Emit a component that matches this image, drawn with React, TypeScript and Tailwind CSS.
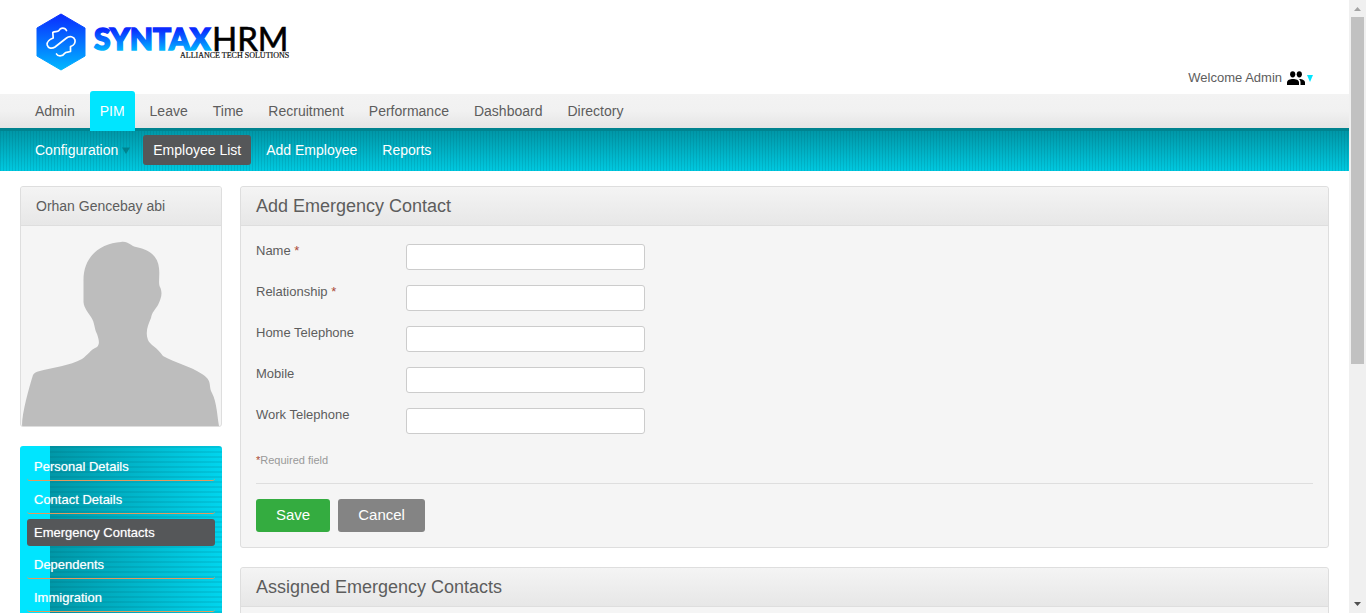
import { useState } from "react";

const modules = ["Admin", "PIM", "Leave", "Time", "Recruitment", "Performance", "Dashboard", "Directory"];

const sections = [
  { name: "Personal Details" },
  { name: "Contact Details" },
  { name: "Emergency Contacts", active: true },
  { name: "Dependents" },
  { name: "Immigration" },
];

const fields = [
  { id: "name", label: "Name", required: true },
  { id: "relationship", label: "Relationship", required: true },
  { id: "homePhone", label: "Home Telephone", required: false },
  { id: "mobile", label: "Mobile", required: false },
  { id: "workPhone", label: "Work Telephone", required: false },
];

function Logo() {
  return (
    <svg className="block h-[64px] w-[264px]" viewBox="30 10 264 64" role="img" aria-label="SyntaxHRM Alliance Tech Solutions">
      <defs>
        <linearGradient id="hex" x1="0" y1="0" x2="0" y2="1">
          <stop offset="0" stopColor="#0a2bff" />
          <stop offset="1" stopColor="#00b8ff" />
        </linearGradient>
        <linearGradient id="word" gradientUnits="userSpaceOnUse" x1="0" y1="27" x2="0" y2="52">
          <stop offset="0.1" stopColor="#0a2bff" />
          <stop offset="1" stopColor="#00c0ff" />
        </linearGradient>
      </defs>
      <path d="M61 14 85 28V56L61 70 37 56V28Z" fill="url(#hex)" stroke="url(#hex)" strokeLinejoin="round" />
      <path
        d="M66.500 30.500C65 27.300 60.500 27.300 59 30.500C57.500 32.500 55 31 52.800 32.500L53.200 38C50 39.200 46.500 42 47.200 45C48.200 48.500 52 49 55 47L66.500 38C69.500 35.500 74 36.500 75 40C75.500 43 73.500 45.500 70.500 46.500V51.500C68 52.500 66 51.500 64.500 53.500C62.500 56.800 57.500 56.500 56.500 54"
        fill="none"
        stroke="#fff"
        strokeWidth="1.700"
        strokeLinecap="round"
        strokeLinejoin="round"
      />
      <text x="94" y="50" fontFamily="Lato, sans-serif" fontSize="30" fontWeight="900" fill="url(#word)" stroke="url(#word)" strokeWidth="1.600">SYNTAX</text>
      <text x="212" y="51" fontFamily="Lato, sans-serif" fontSize="33" fill="#000" stroke="#000" strokeWidth="0.600">HRM</text>
      <text x="180" y="58" fontFamily="'Liberation Serif', serif" fontSize="8" fill="#111" stroke="#111" strokeWidth="0.200">ALLIANCE TECH SOLUTIONS</text>
    </svg>
  );
}

function Silhouette() {
  return (
    <svg className="block w-full" viewBox="0 0 200 200" aria-hidden="true">
      <path
        d="M1 200C1 186 8 162 12 149C13 147 15 146 17 145.500C32 141 49 140 61 133C67 129 69 124 76 121C79 118 78 114 76 108C73 102 74 97 70 91C67 86 63 82 62.500 76V55C62 30 80 17 100 16C108 15 109 20 115 21C130 24 137 31 138 42C139 50 137 57 139 61C142 67 140 73 137 79C134 84 131 86 130 92C127 99 124 106 127 114C129 119 136 121 142 130C155 137 169 140 181 148C192 155 187 159 191 167C196 177 196 189 198 200Z"
        fill="#bdbdbd"
      />
    </svg>
  );
}

function PanelHead({ title }: { title: string }) {
  return (
    <div className="flex h-[39px] items-center rounded-t-[3px] border-b border-[#dedede] bg-gradient-to-b from-[#f4f4f4] to-[#e7e7e7] px-[15px]">
      <h1 className="text-[18px] leading-6 text-[#5d5d5d]">{title}</h1>
    </div>
  );
}

export default function App() {
  const [values, setValues] = useState<Record<string, string>>({});

  return (
    <div className="flex h-screen overflow-hidden bg-white text-[#5d5d5d] [font-family:'Liberation_Sans',Arial,sans-serif]">
      <div className="min-w-0 flex-1 overflow-hidden">
        <header className="flex h-[94px] items-start justify-between pt-[10px] pr-9 pl-[30px]">
          <a href="#home"><Logo /></a>
          <button type="button" className="mt-[58px] flex items-center text-[13px] leading-5">
            Welcome Admin
            <svg className="ml-[5px] h-4 w-[18px]" viewBox="0 0 18 16" fill="#000" aria-hidden="true">
              <ellipse cx="5.700" cy="4.300" rx="2.600" ry="3.100" />
              <ellipse cx="12.300" cy="4.300" rx="2.600" ry="3.100" />
              <path d="M0 15V12.500C0 10 3 9 6 9S12 10 12 12.500V15Z" />
              <path d="M12 9C15.500 9 18 10.300 18 12.500V15H13.500V12.500C13.500 11 13 10 12 9Z" />
            </svg>
            <svg className="ml-0.5 h-[7px] w-[6px]" viewBox="0 0 6 7" aria-hidden="true"><path d="M0 0H6L3 7Z" fill="#00e5ff" /></svg>
          </button>
        </header>

        <nav aria-label="Modules" className="flex h-[34px] items-end bg-gradient-to-b from-[#f3f3f3] via-[#f1f1f1] to-[#e5e5e5] pl-[25px]">
          <ul className="-mb-[3px] flex items-end gap-[5px]">
            {modules.map((item) => (
              <li key={item}>
                <a
                  href={`#${item.toLowerCase()}`}
                  className={
                    item === "PIM"
                      ? "relative block h-10 rounded-t-[3px] bg-[#00e5ff] px-[10px] text-[14px] leading-10 text-white"
                      : "block h-10 px-[10px] text-[14px] leading-10"
                  }
                >
                  {item}
                </a>
              </li>
            ))}
          </ul>
        </nav>

        <nav
          aria-label="Employee pages"
          className="h-[43px] border-t-[3px] border-[#00838f] bg-[repeating-linear-gradient(90deg,rgba(0,80,95,0.14)_0_1px,transparent_1px_3px),linear-gradient(180deg,#0097a7,#00c9e0)] pt-1 pl-[25px]"
        >
          <ul className="flex text-[14px] leading-[30px] text-white">
            <li>
              <a href="#configuration" className="flex items-center pr-[13px] pl-[10px]">
                Configuration
                <svg className="ml-1 h-[7px] w-[8px]" viewBox="0 0 8 7" aria-hidden="true"><path d="M0 0.500H8L4 7Z" fill="#00838f" /></svg>
              </a>
            </li>
            <li><a href="#employees" className="block rounded-[3px] bg-[#555759] px-[10px]">Employee List</a></li>
            <li className="ml-[5px]"><a href="#add-employee" className="block px-[10px]">Add Employee</a></li>
            <li className="ml-[5px]"><a href="#reports" className="block px-[10px]">Reports</a></li>
          </ul>
        </nav>

        <div className="flex items-start gap-[18px] pt-[15px] pr-5 pl-5">
          <aside className="w-[202px] shrink-0">
            <div className="overflow-hidden rounded-[3px] border border-[#dedede] bg-[#f5f5f5]">
              <div className="flex h-[39px] items-center border-b border-[#dedede] bg-gradient-to-b from-[#f4f4f4] to-[#e7e7e7] px-[15px]">
                <h2 className="text-[14px] leading-5">Orhan Gencebay abi</h2>
              </div>
              <Silhouette />
            </div>
            <ul className="mt-[19px] flex flex-col gap-[5px] rounded-[3px] bg-[linear-gradient(90deg,#00e5ff_0_30px,transparent_30px),repeating-linear-gradient(180deg,rgba(0,80,95,0.12)_0_2px,transparent_2px_5px),linear-gradient(90deg,#0097a7_30px,#00d5ee)] p-[7px] text-[13px] text-white [text-shadow:0_0_1px_rgba(255,255,255,0.6)]">
              {sections.map((s) => (
                <li key={s.name}>
                  <a
                    href={`#${s.name.replace(" ", "-").toLowerCase()}`}
                    className={
                      s.active
                        ? "block h-[27px] rounded-[3px] bg-[#555759] px-[7px] leading-[27px]"
                        : "block h-7 rounded-[3px] border-b border-[#e59a5c] px-[7px] leading-[27px]"
                    }
                  >
                    {s.name}
                  </a>
                </li>
              ))}
            </ul>
          </aside>

          <main className="flex min-w-0 flex-1 flex-col gap-[19px]">
            <section className="rounded-[3px] border border-[#dedede] bg-[#f5f5f5]">
              <PanelHead title="Add Emergency Contact" />
              <form className="px-[15px] pt-[18px] pb-[15px]" onSubmit={(e) => e.preventDefault()}>
                <div className="flex flex-col gap-[15px]">
                  {fields.map((f) => (
                    <div key={f.id} className="flex items-start">
                      <label htmlFor={f.id} className="w-[150px] text-[13px] leading-[13px]">
                        {f.label}
                        {f.required && <em className="not-italic text-[#aa4935]"> *</em>}
                      </label>
                      <input
                        id={f.id}
                        type="text"
                        value={values[f.id] ?? ""}
                        onChange={(e) => setValues({ ...values, [f.id]: e.target.value })}
                        className="h-[26px] w-[239px] rounded-[3px] border border-[#cccccc] bg-white px-1 text-[13px]"
                      />
                    </div>
                  ))}
                </div>
                <p className="mt-5 border-b border-[#dedede] pb-4 text-[11px] leading-[13px] text-[#999999]">
                  <em className="not-italic text-[#aa4935]">*</em>Required field
                </p>
                <div className="mt-[15px] flex gap-2">
                  <button type="submit" className="h-[33px] rounded-[3px] bg-[#34ac40] px-5 text-[15px] text-white">Save</button>
                  <button type="button" className="h-[33px] rounded-[3px] bg-[#848484] px-5 text-[15px] text-white">Cancel</button>
                </div>
              </form>
            </section>

            <section className="rounded-[3px] border border-[#dedede] bg-[#f5f5f5]">
              <PanelHead title="Assigned Emergency Contacts" />
              <div className="h-40" />
            </section>
          </main>
        </div>
      </div>

      <div aria-hidden="true" className="flex w-[17px] shrink-0 flex-col items-center bg-[#f0f0f0]">
        <svg className="h-[17px] w-[17px] shrink-0" viewBox="0 0 17 17"><path d="M5 11H12L8.500 7Z" fill="#a3a3a3" /></svg>
        <div className="flex w-[13px] flex-1 flex-col">
          <div className="h-3/5 bg-[#c1c1c1]" />
        </div>
        <svg className="h-[17px] w-[17px] shrink-0" viewBox="0 0 17 17"><path d="M5 6H12L8.500 10Z" fill="#505050" /></svg>
      </div>
    </div>
  );
}
